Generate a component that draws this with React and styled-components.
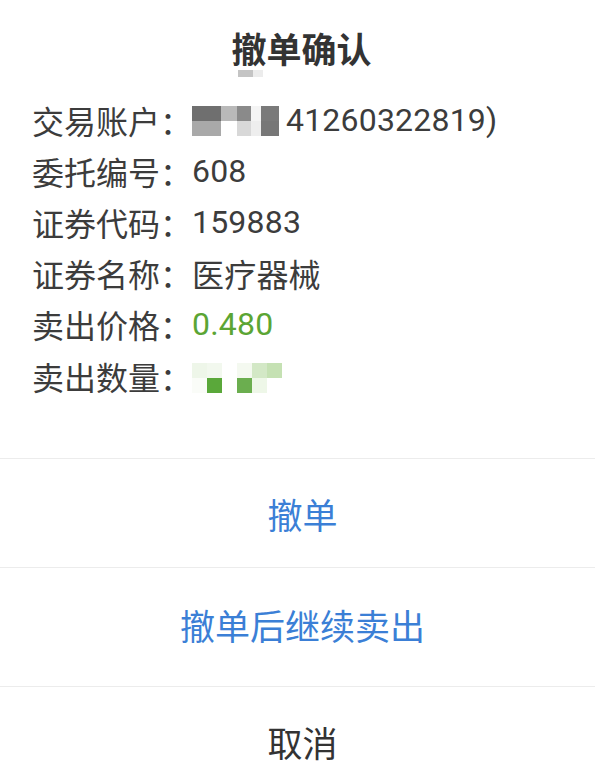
import React from 'react';
import styled, { createGlobalStyle } from 'styled-components';

const GlobalStyle = createGlobalStyle`
    body {
        margin: 0;
        background-color: #fff;
        font-family: Roboto, "Noto Sans CJK SC", sans-serif;
    }
`;

const Dialog = styled.div`
    width: 595px;
    height: 784px;
    overflow: hidden;
    background-color: #fff;
`;

const Header = styled.div`
    position: relative;
    padding-top: 22px;
    height: 72px;
    text-align: center;
`;

const Title = styled.h1`
    margin: 0;
    font-size: 35px;
    line-height: 60px;
    font-weight: 700;
    color: #333;
    padding-left: 8px;
`;

const TitleMask = styled.svg`
    position: absolute;
    left: 238px;
    top: 70px;
`;

const Info = styled.section`
    padding: 0 0 57px 32px;
`;

const Row = styled.div`
    display: flex;
    align-items: center;
    height: 51.2px;
    font-size: 32px;
    color: #3c3c3c;
`;

const Label = styled.span`
    width: 160px;
    flex-shrink: 0;
`;

const Value = styled.span`
    display: flex;
    align-items: center;
    color: ${({ green }) => (green ? '#5ba534' : '#3c3c3c')};
    letter-spacing: 0.2px;
`;

const Mosaic = styled.svg`
    display: block;
    filter: blur(0.6px);
    margin-top: ${({ shift }) => shift || 0}px;
    margin-right: ${({ gap }) => gap || 0}px;
`;

const Action = styled.button`
    display: flex;
    align-items: center;
    justify-content: center;
    width: 100%;
    height: ${({ h }) => h}px;
    padding: 0 0 ${({ lift }) => lift || 0}px 10px;
    border: none;
    border-top: 1px solid #ececec;
    background: #fff;
    font-family: Roboto, "Noto Sans CJK SC", sans-serif;
    font-size: 35px;
    color: ${({ blue }) => (blue ? '#3b7fd6' : '#333')};
    cursor: pointer;
`;

const accountCells = [
    [0, 0, 29, '#6f6f6f'], [29, 0, 16, '#b9b9b9'], [45, 0, 14, '#8a8a8a'], [59, 0, 10, '#f4f4f4'], [69, 0, 18, '#7a7a7a'],
    [0, 15, 29, '#a9a9a9'], [29, 15, 16, '#ffffff'], [45, 15, 14, '#d8d8d8'], [59, 15, 10, '#eeeeee'], [69, 15, 18, '#777777'],
];

const qtyCells = [
    [0, 0, '#eef6e9'], [15, 0, '#f2f8ee'], [45, 0, '#f4f9f0'], [60, 0, '#d3e8c6'], [75, 0, '#c5e1b3'],
    [0, 15, '#fafcf8'], [15, 15, '#5aa83a'], [45, 15, '#6bae4f'], [60, 15, '#eef7e8'],
];

const AccountMask = () => (
    <Mosaic width="88" height="30" shift={2} gap={6}>
        {accountCells.map(([x, y, w, c], i) => (
            <rect key={i} x={x} y={y} width={w} height="15" fill={c} />
        ))}
    </Mosaic>
);

const QtyMask = () => (
    <Mosaic width="90" height="30" shift={4}>
        {qtyCells.map(([x, y, c], i) => (
            <rect key={i} x={x} y={y} width="15" height="15" fill={c} />
        ))}
    </Mosaic>
);

const rows = [
    { label: '交易账户：', value: <><AccountMask /><span>41260322819)</span></> },
    { label: '委托编号：', value: '608' },
    { label: '证券代码：', value: '159883' },
    { label: '证券名称：', value: '医疗器械' },
    { label: '卖出价格：', value: '0.480', green: true },
    { label: '卖出数量：', value: <QtyMask /> },
];

export default function App() {
    return (
        <>
            <GlobalStyle />
            <Dialog>
                <Header>
                    <Title>撤单确认</Title>
                    <TitleMask width="26" height="8">
                        <rect x="0" y="0" width="15" height="7" fill="#c4c4c4" />
                        <rect x="15" y="0" width="10" height="7" fill="#ececec" />
                    </TitleMask>
                </Header>
                <Info>
                    {rows.map(r => (
                        <Row key={r.label}>
                            <Label>{r.label}</Label>
                            <Value green={r.green}>{r.value}</Value>
                        </Row>
                    ))}
                </Info>
                <Action blue h={109}>撤单</Action>
                <Action blue h={119} lift={6}>撤单后继续卖出</Action>
                <Action h={110}>取消</Action>
            </Dialog>
        </>
    );
}
